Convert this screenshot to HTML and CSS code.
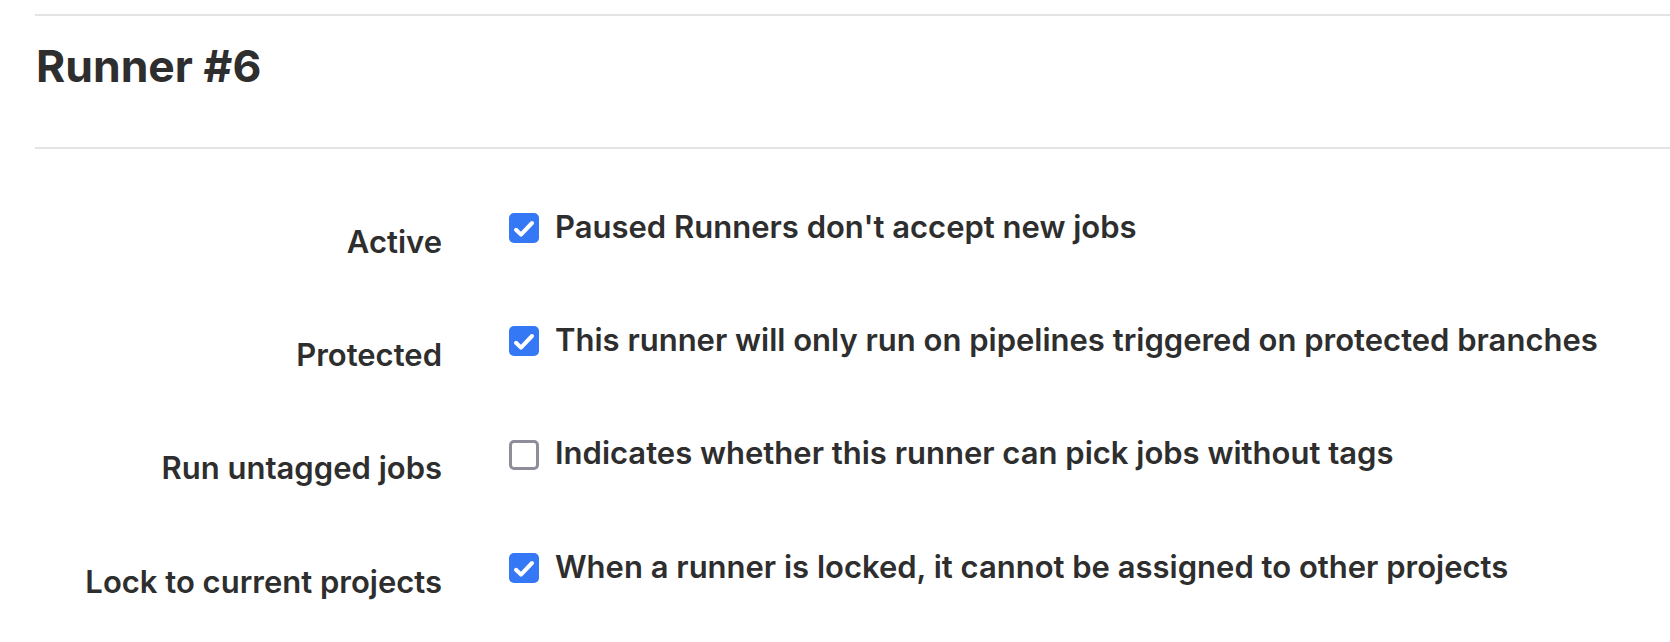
FILE: index.html
```html
<!DOCTYPE html>
<html>
<head>
<meta charset="utf-8">
<link rel="stylesheet" href="styles.css">
</head>
<body>
<div class="page">
  <div class="rule rule-top"></div>
  <h3 class="title">Runner #6</h3>
  <div class="rule rule-mid"></div>
  <form class="form">
    <div class="row">
      <div class="label">Active</div>
      <div class="field">
        <span class="box checked"><svg viewBox="0 0 30 30" width="30" height="30"><polyline points="7,16.8 12,21.6 23,10" fill="none" stroke="#fff" stroke-width="4" stroke-linecap="round" stroke-linejoin="round"/></svg></span>
        <span class="text">Paused Runners don't accept new jobs</span>
      </div>
    </div>
    <div class="row">
      <div class="label">Protected</div>
      <div class="field">
        <span class="box checked"><svg viewBox="0 0 30 30" width="30" height="30"><polyline points="7,16.8 12,21.6 23,10" fill="none" stroke="#fff" stroke-width="4" stroke-linecap="round" stroke-linejoin="round"/></svg></span>
        <span class="text">This runner will only run on pipelines triggered on protected branches</span>
      </div>
    </div>
    <div class="row">
      <div class="label">Run untagged jobs</div>
      <div class="field">
        <span class="box"></span>
        <span class="text">Indicates whether this runner can pick jobs without tags</span>
      </div>
    </div>
    <div class="row">
      <div class="label">Lock to current projects</div>
      <div class="field">
        <span class="box checked"><svg viewBox="0 0 30 30" width="30" height="30"><polyline points="7,16.8 12,21.6 23,10" fill="none" stroke="#fff" stroke-width="4" stroke-linecap="round" stroke-linejoin="round"/></svg></span>
        <span class="text">When a runner is locked, it cannot be assigned to other projects</span>
      </div>
    </div>
  </form>
</div>
</body>
</html>
```
FILE: styles.css
```css
html, body {
  margin: 0;
  padding: 0;
  background: #ffffff;
}
body {
  font-family: Inter, "Noto Sans", "Liberation Sans", sans-serif;
  color: #2e2e2e;
}
.page {
  padding: 14px 0 0 35px;
}
.rule {
  height: 2px;
  background: #e4e4e4;
}
.title {
  margin: 23.8px 0 54.2px 1px;
  font-size: 44.5px;
  line-height: 53px;
  font-weight: 700;
  letter-spacing: 0;
}
.form {
  display: flex;
  flex-direction: column;
  gap: 62.4px;
  padding-top: 59.7px;
}
.row {
  display: grid;
  grid-template-columns: 407px 1fr;
  column-gap: 67px;
  height: 51px;
}
.label {
  text-align: right;
  padding-top: 15px;
  font-size: 31px;
  line-height: 36px;
  font-weight: 600;
  white-space: nowrap;
}
.field {
  display: flex;
  align-items: flex-start;
  gap: 16px;
}
.box {
  flex: none;
  box-sizing: border-box;
  width: 30px;
  height: 30px;
  margin-top: 4.3px;
  border-radius: 5px;
  border: 3px solid #8e8d99;
  background: #fff;
}
.box.checked {
  border: none;
  background: #3478f6;
}
.box svg {
  display: block;
}
.text {
  font-size: 31px;
  line-height: 36px;
  font-weight: 600;
  white-space: nowrap;
}
```
